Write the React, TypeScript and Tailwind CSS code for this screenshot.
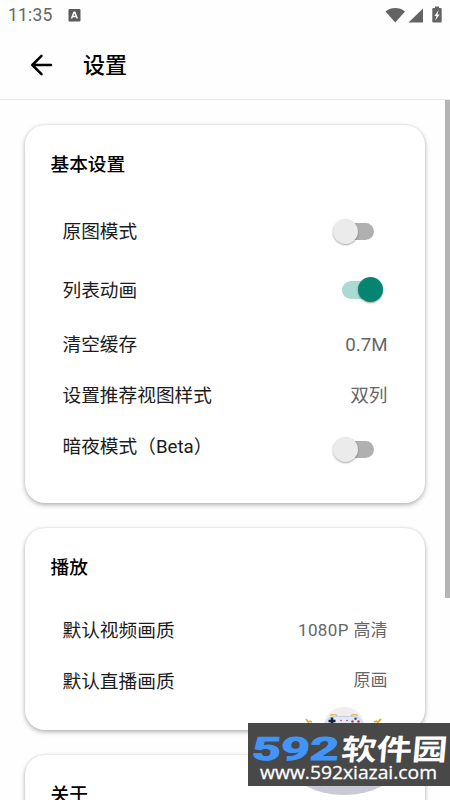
import { type ReactNode } from "react";

function StatusBar() {
  return (
    <div className="flex h-[30px] items-center justify-between pl-2 pr-2 text-[#666666]">
      <div className="flex items-center pt-px">
        <span className="w-[60px] text-[17.5px] leading-none tracking-[0.2px]">11:35</span>
        <svg width="13" height="14" viewBox="0 0 13 14">
          <rect x="0.5" y="0" width="12" height="12.5" rx="1" fill="#5b5b5b" />
          <path d="M3.5 9.5 6 3.2h.8l2.5 6.3M4.6 7.4h3.6" fill="none" stroke="#fff" strokeWidth="1.5" />
        </svg>
      </div>
      <svg width="58" height="18" viewBox="0 0 58 18" fill="#636363">
        <path d="M1.5 5.4C6.8.9 15.7.9 21 5.4L11.3 16.6Z" />
        <path d="M39 2.5v14H24.5Z" />
        <path
          fillRule="evenodd"
          d="M51 .5h4v1.6h1.7q1 0 1 1v12.5q0 1-1 1h-7.4q-1 0-1-1V3.1q0-1 1-1H51ZM54.7 4l-4.3 6h2.1l-1.3 4.6 4.4-6h-2.2Z"
        />
      </svg>
    </div>
  );
}

function Toggle({ on = false }: { on?: boolean }) {
  if (on) {
    return (
      <div className="relative h-[18px] w-[40px] rounded-full bg-[#abdad2]" role="switch" aria-checked="true">
        <span className="absolute -top-[4px] right-[-1px] size-[25px] rounded-full bg-[#058472] shadow-[0_1px_2px_rgba(0,0,0,0.4)]" />
      </div>
    );
  }
  return (
    <div className="relative mr-[14px] h-[17px] w-[36px] rounded-full bg-[#b0b0b0]" role="switch" aria-checked="false">
      <span className="absolute -left-[5px] -top-[4px] size-[25px] rounded-full bg-[#ebebeb] shadow-[0_1px_2px_rgba(0,0,0,0.35)]" />
    </div>
  );
}

function Card({ title, className, children }: { title: string; className: string; children?: ReactNode }) {
  return (
    <section
      className={`shrink-0 rounded-[20px] bg-white pl-[25.5px] pt-[27px] shadow-[0_2px_5px_rgba(0,0,0,0.28),0_0_3px_rgba(0,0,0,0.1)] ${className}`}
    >
      <h2 className="h-[51px] text-[18.7px] font-medium leading-[26px] text-black">{title}</h2>
      {children}
    </section>
  );
}

function Row({ label, className, children }: { label: ReactNode; className: string; children: ReactNode }) {
  return (
    <div className={`flex items-center justify-between pl-3 pr-[37.5px] ${className}`}>
      <span className="text-[18.7px] leading-[26px] text-[#1b1b1b]">{label}</span>
      {children}
    </div>
  );
}

function Watermark() {
  return (
    <svg className="absolute left-[248px] top-[700px]" width="202" height="100" viewBox="248 700 202 100">
      <ellipse cx="344" cy="765" rx="53" ry="30" fill="#c9cad6" />
      <circle cx="344" cy="728" r="21" fill="#eeeeef" />
      <path d="M325.5 725q1-7 7-8.5h23q6 1.5 7 8.5Z" fill="#e6e8f6" stroke="#c0c5e4" strokeWidth="0.8" />
      <path d="M332 717.5v7m-3.5-3.500h7" stroke="#132536" strokeWidth="2.6" />
      <path d="M330 715.5q3.5-1.8 7 0m14 0q3.500-1.800 7 0" fill="none" stroke="#e2b93b" strokeWidth="1.4" />
      <g fill="#b3435b">
        <circle cx="341" cy="720.5" r=".8" />
        <circle cx="347" cy="720.5" r=".8" />
        <circle cx="352.5" cy="721.5" r="1.3" />
        <circle cx="358.5" cy="721.5" r="1.3" />
      </g>
      <circle cx="355.5" cy="718.8" r="1.3" fill="#32599c" />
      <path d="m306 719 3 4m0-2 3 1m69-3-4 4m0-2-3 1" stroke="#d9ae36" strokeWidth="1.8" fill="none" />
      <rect x="248" y="723" width="202" height="63" fill="#484848" />
      <g transform="translate(251 759.5) skewX(-5)">
        <text
          className="font-[Roboto,sans-serif] text-[32px] font-bold"
          fill="#4295f7"
          stroke="#4295f7"
          strokeWidth="1"
          strokeLinejoin="miter"
          textLength="87"
          lengthAdjust="spacingAndGlyphs"
        >
          592
        </text>
      </g>
      <g transform="translate(340.500 759.500) skewX(-5)">
        <text
          className="font-['Noto_Sans_CJK_SC',sans-serif] text-[29px] font-bold"
          fill="#fff"
          textLength="106"
          lengthAdjust="spacingAndGlyphs"
        >
          软件园
        </text>
      </g>
      <text
        x="260"
        y="779"
        className="font-['Open_Sans',sans-serif] text-[19px]"
        fill="#fff"
        stroke="#fff"
        strokeWidth="0.3"
        textLength="177"
        lengthAdjust="spacingAndGlyphs"
      >
        www.592xiazai.com
      </text>
    </svg>
  );
}

export default function App() {
  return (
    <div
      lang="zh-CN"
      className="relative flex h-[800px] w-[450px] flex-col overflow-hidden bg-[#fefefe] font-[Roboto,'Noto_Sans_CJK_SC',sans-serif]"
    >
      <StatusBar />
      <header className="flex h-[70px] shrink-0 items-center border-b border-[#e8e8e8] pl-[30px]">
        <svg width="23" height="22" viewBox="0 0 23 22" fill="none" stroke="#000" strokeWidth="2.5" strokeLinecap="round" strokeLinejoin="round">
          <path d="M21 11H2.3M11.5 1.8 2.3 11l9.2 9.2" />
        </svg>
        <h1 className="pl-[30px] pt-[2px] text-[22px] font-medium leading-8 text-black">设置</h1>
      </header>
      <main className="flex min-h-0 flex-1 justify-between">
        <div className="flex flex-col gap-[25px] pl-[25px] pt-[25px]">
          <Card title="基本设置" className="h-[378px] w-[400px]">
            <Row label="原图模式" className="h-[58.5px]">
              <div className="pb-[2px]">
                <Toggle />
              </div>
            </Row>
            <Row label="列表动画" className="h-[58.5px]">
              <div className="pb-[2px] pr-[6px]">
                <Toggle on />
              </div>
            </Row>
            <Row label="清空缓存" className="h-[50.5px]">
              <span className="text-[18.7px] leading-[26px] text-[#666666]">0.7M</span>
            </Row>
            <Row label="设置推荐视图样式" className="h-[51px]">
              <span className="text-[18.7px] leading-[26px] text-[#666666]">双列</span>
            </Row>
            <Row label="暗夜模式（Beta）" className="h-[50.5px]">
              <div className="pt-[6px]">
                <Toggle />
              </div>
            </Row>
          </Card>
          <Card title="播放" className="h-[202px] w-[400px]">
            <Row label="默认视频画质" className="h-[50.5px]">
              <span className="pb-[2px] text-[17px] leading-[26px] text-[#666666]">
                <span className="tracking-[0.4px]">1080P </span>高清
              </span>
            </Row>
            <Row label="默认直播画质" className="h-[51px]">
              <span className="pb-[4px] text-[17px] leading-[26px] text-[#666666]">原画</span>
            </Row>
          </Card>
          <Card title="关于" className="h-[200px] w-[400px]" />
        </div>
        <div className="h-[498px] w-[5px] bg-[#b4b4b4]" />
      </main>
      <Watermark />
    </div>
  );
}
